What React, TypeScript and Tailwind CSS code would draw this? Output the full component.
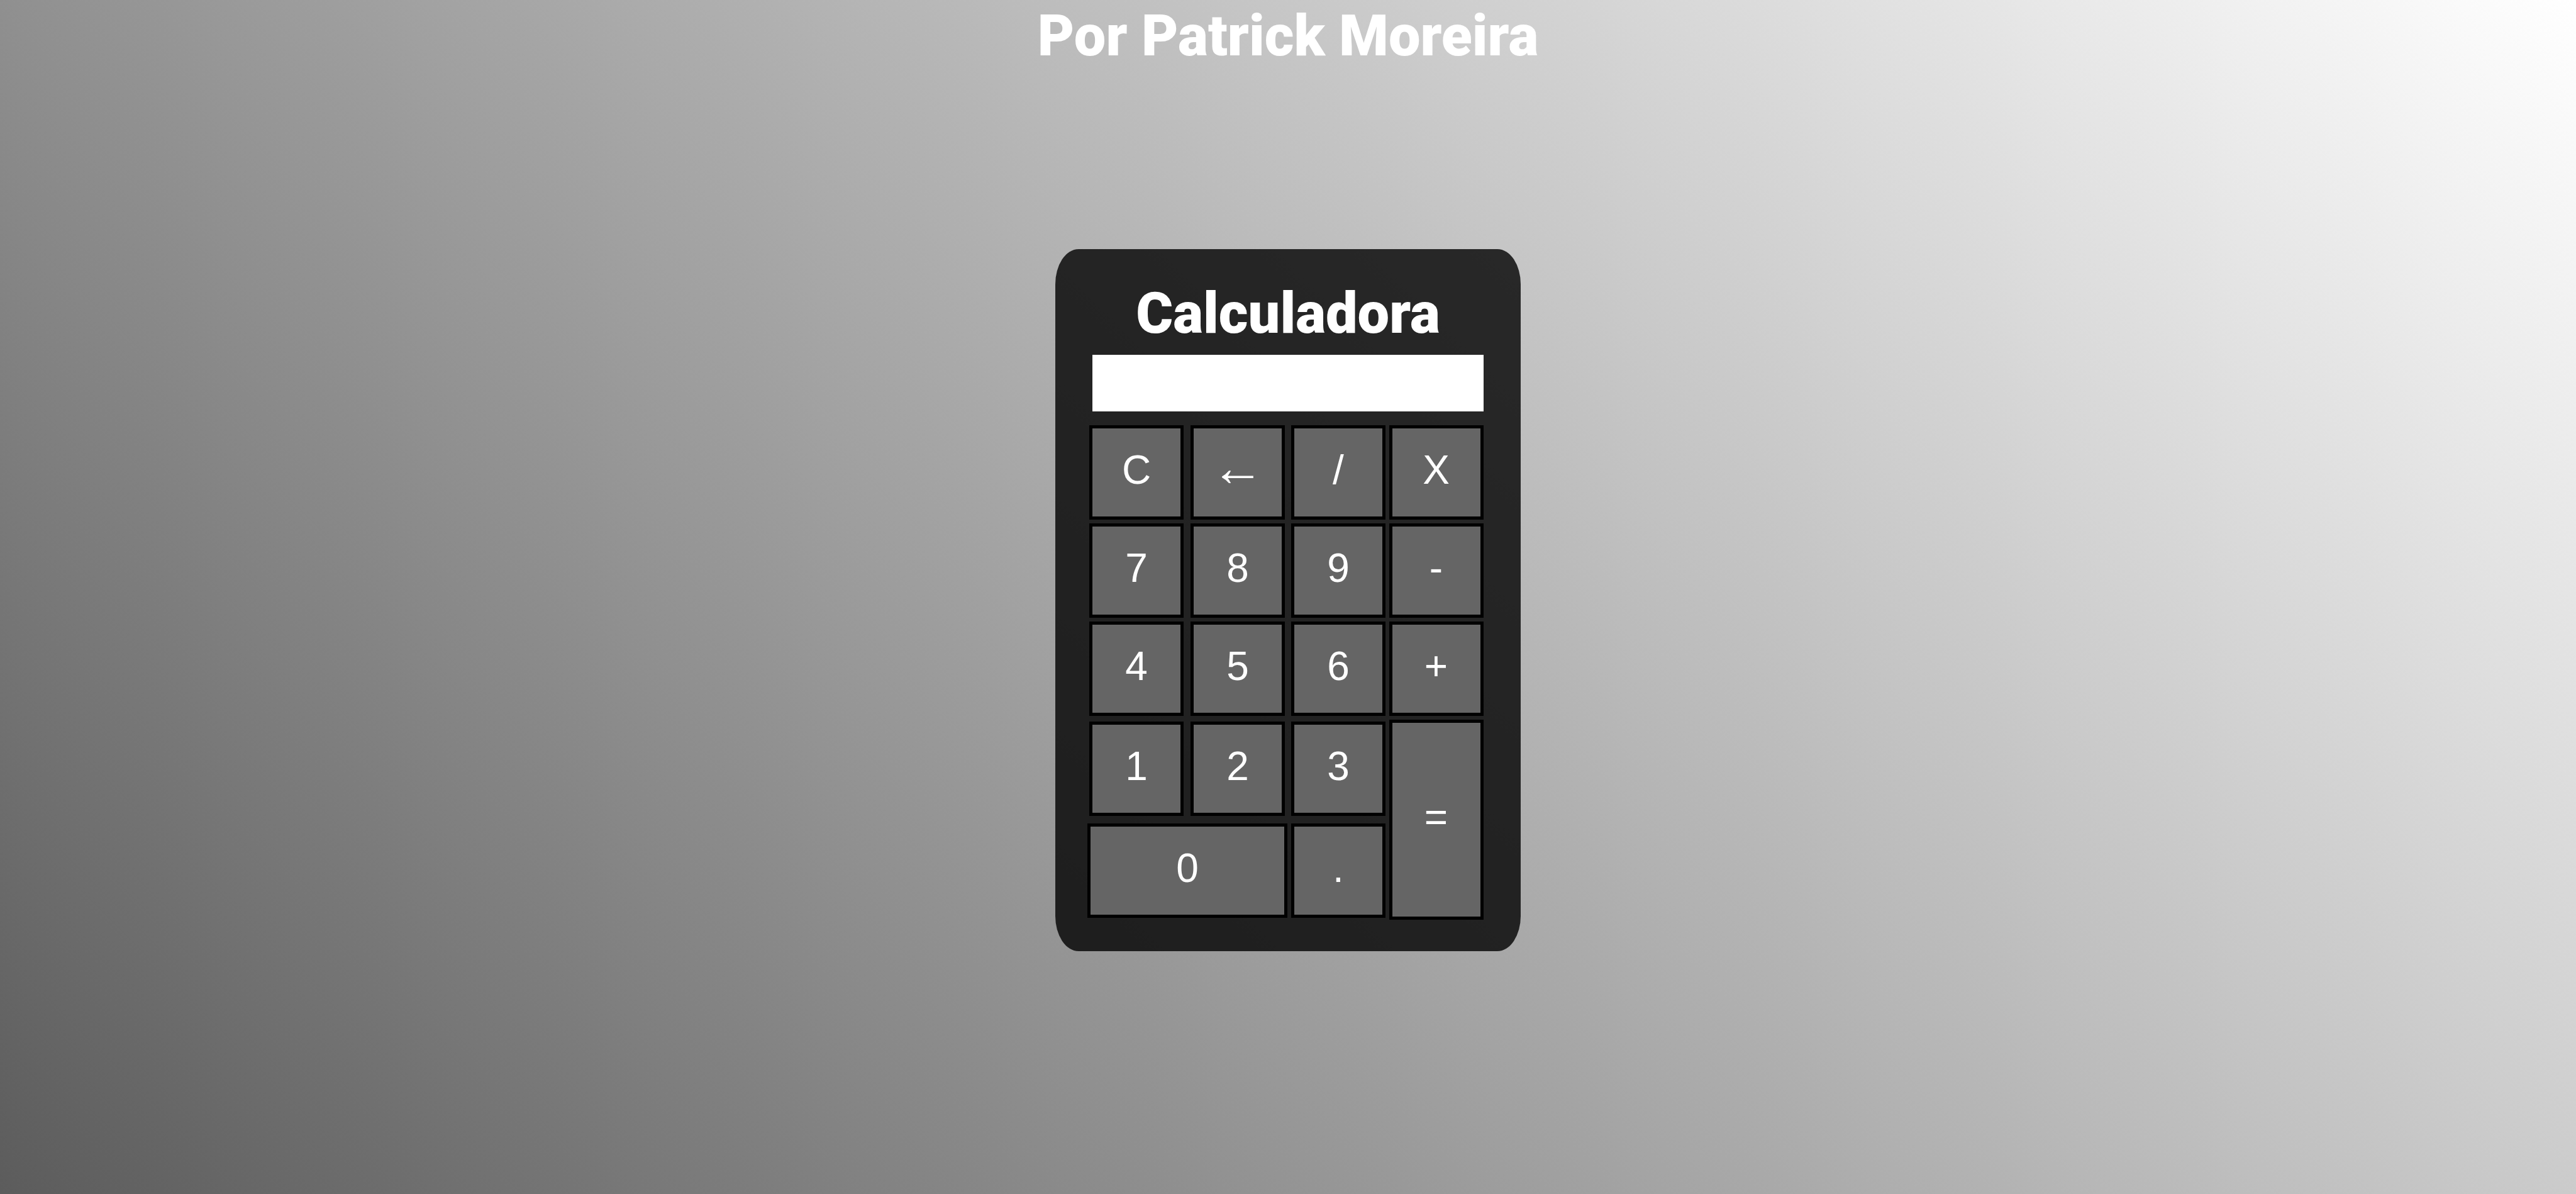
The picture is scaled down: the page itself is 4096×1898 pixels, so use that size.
type Key = { label: string; name?: string; className?: string; textClassName?: string };

const keys: Key[] = [
  { label: 'C', name: 'Limpar' },
  { label: '←', name: 'Apagar', textClassName: 'pb-2 text-[84px] leading-[84px]' },
  { label: '/', name: 'Dividir' },
  { label: 'X', name: 'Multiplicar' },
  { label: '7' },
  { label: '8' },
  { label: '9' },
  { label: '-', name: 'Subtrair' },
  { label: '4' },
  { label: '5' },
  { label: '6' },
  { label: '+', name: 'Somar' },
  { label: '1' },
  { label: '2' },
  { label: '3' },
  { label: '=', name: 'Igual', className: 'row-span-2 h-[318px] w-[150px] self-center justify-self-center' },
  { label: '0', className: 'col-span-2 h-[150px] w-[318px]' },
  { label: '.', name: 'Ponto' },
];

const regular = 'h-[150px] w-[150px] justify-self-center';

export default function App() {
  return (
    <div className="flex min-h-screen flex-col items-center bg-[linear-gradient(45deg,#5c5c5c,#ffffff)] text-white">
      <h1 className="pt-2 font-['Roboto','Liberation_Sans',sans-serif] text-[90px] leading-[100px] font-black">
        Por Patrick Moreira
      </h1>
      <main className="mt-[288px] flex w-[740px] flex-col rounded-[5%] bg-black/80 px-[51px] pt-[53px] pb-[53px]">
        <h2 className="text-center font-['Roboto','Liberation_Sans',sans-serif] text-[90px] leading-[100px] font-black">
          Calculadora
        </h2>
        <input
          type="text"
          readOnly
          aria-label="Resultado"
          className="mx-auto mt-[15px] h-[90px] w-[622px] bg-white px-4 text-right text-[64px] text-black outline-none"
        />
        <div className="mt-[22px] grid grid-cols-[156px_166px_154px_157px] grid-rows-[156px_156px_159px_162px_150px]">
          {keys.map((key) => (
            <button
              key={key.label}
              type="button"
              aria-label={key.name}
              className={`flex items-center justify-center border-[5px] border-black bg-[#656565] pb-2 font-['Liberation_Sans',Arial,sans-serif] text-[64px] leading-[64px] ${key.className ?? regular}`}
            >
              <span className={key.textClassName}>{key.label}</span>
            </button>
          ))}
        </div>
      </main>
    </div>
  );
}
